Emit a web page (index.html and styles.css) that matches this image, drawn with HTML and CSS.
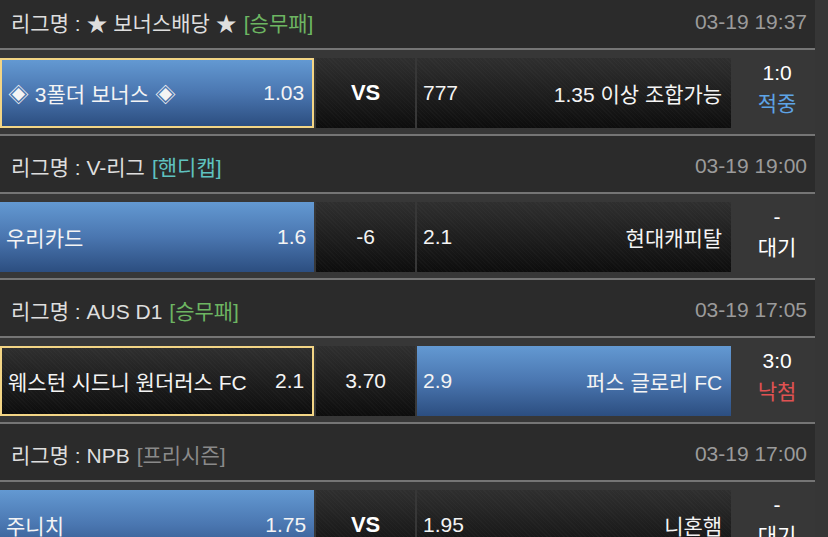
FILE: index.html
```html
<!DOCTYPE html>
<html lang="ko">
<head>
<meta charset="utf-8">
<title>경기 목록</title>
<link rel="stylesheet" href="styles.css">
</head>
<body>
<div class="list">
  <section class="block">
    <div class="league">
      <div class="league-name">리그명 : ★ 보너스배당 ★<span class="tag tag-green">[승무패]</span></div>
      <div class="league-date">03-19 19:37</div>
    </div>
    <div class="match">
      <div class="cell team home blue picked"><span class="name">◈ 3폴더 보너스 ◈</span><span class="odds">1.03</span></div>
      <div class="cell mid dark"><span class="vs">VS</span></div>
      <div class="cell team away dark"><span class="odds">777</span><span class="name">1.35 이상 조합가능</span></div>
      <div class="result"><span class="score">1:0</span><span class="status hit">적중</span></div>
    </div>
  </section>
  <section class="block">
    <div class="league">
      <div class="league-name">리그명 : V-리그<span class="tag tag-teal">[핸디캡]</span></div>
      <div class="league-date">03-19 19:00</div>
    </div>
    <div class="match">
      <div class="cell team home blue"><span class="name">우리카드</span><span class="odds">1.6</span></div>
      <div class="cell mid dark"><span>-6</span></div>
      <div class="cell team away dark"><span class="odds">2.1</span><span class="name">현대캐피탈</span></div>
      <div class="result"><span class="score">-</span><span class="status">대기</span></div>
    </div>
  </section>
  <section class="block">
    <div class="league">
      <div class="league-name">리그명 : AUS D1<span class="tag tag-green">[승무패]</span></div>
      <div class="league-date">03-19 17:05</div>
    </div>
    <div class="match">
      <div class="cell team home dark picked"><span class="name">웨스턴 시드니 원더러스 FC</span><span class="odds">2.1</span></div>
      <div class="cell mid dark"><span>3.70</span></div>
      <div class="cell team away blue"><span class="odds">2.9</span><span class="name">퍼스 글로리 FC</span></div>
      <div class="result"><span class="score">3:0</span><span class="status miss">낙첨</span></div>
    </div>
  </section>
  <section class="block">
    <div class="league">
      <div class="league-name">리그명 : NPB<span class="tag tag-gray">[프리시즌]</span></div>
      <div class="league-date">03-19 17:00</div>
    </div>
    <div class="match">
      <div class="cell team home blue"><span class="name">주니치</span><span class="odds">1.75</span></div>
      <div class="cell mid dark"><span class="vs">VS</span></div>
      <div class="cell team away dark"><span class="odds">1.95</span><span class="name">니혼햄</span></div>
      <div class="result"><span class="score">-</span><span class="status">대기</span></div>
    </div>
  </section>
</div>
</body>
</html>
```
FILE: styles.css
```css
html, body {
  margin: 0;
  padding: 0;
  background: #363636;
  overflow: hidden;
}
body {
  font-family: "Liberation Sans", Arial, "Noto Sans CJK KR", sans-serif;
  font-size: 21px;
  color: #eeeeee;
}
.list {
  width: 815px;
  margin-top: -10px;
}
.block {
  border-top: 2px solid #757575;
}
.league {
  height: 58px;
  background: #2b2b2b;
  border-bottom: 2px solid #757575;
  display: flex;
  align-items: center;
  justify-content: space-between;
  padding: 3px 8px 0 11px;
  box-sizing: border-box;
}
.league-name {
  color: #dedede;
}
.tag {
  margin-left: 7px;
}
.tag-green { color: #6db562; }
.tag-teal { color: #5fc2c0; }
.tag-gray { color: #8a8a8a; }
.league-date {
  color: #9b9b9b;
}
.match {
  height: 84px;
  background: #373737;
  display: flex;
  align-items: flex-start;
  padding-top: 8px;
  box-sizing: border-box;
  gap: 2px;
}
.cell {
  height: 70px;
  box-sizing: border-box;
  display: flex;
  align-items: center;
  color: #f4f4f4;
}
.team {
  width: 315px;
  justify-content: space-between;
}
.home {
  padding: 0 8px 0 6px;
}
.away {
  padding: 0 9px 0 6px;
}
.mid {
  width: 99px;
  justify-content: center;
}
.blue {
  background: linear-gradient(to bottom, #6399d2 0%, #4a76b0 50%, #2c4e80 100%);
}
.dark {
  background:
    repeating-linear-gradient(45deg, rgba(255,255,255,0.018) 0 1px, rgba(0,0,0,0) 1px 3px),
    linear-gradient(to bottom, #2f2f2f 0%, #1d1d1d 55%, #0d0d0d 100%);
}
.picked {
  border: 2px solid #f3d585;
}
.vs {
  font-weight: bold;
  font-size: 22px;
  color: #ffffff;
}
.result {
  width: 82px;
  height: 70px;
  display: flex;
  flex-direction: column;
  align-items: center;
  justify-content: center;
  line-height: 31px;
  padding: 0 0 10px 6px;
  box-sizing: border-box;
  color: #ffffff;
}
.status.hit { color: #5ea4e6; }
.status.miss { color: #e05252; }
```
